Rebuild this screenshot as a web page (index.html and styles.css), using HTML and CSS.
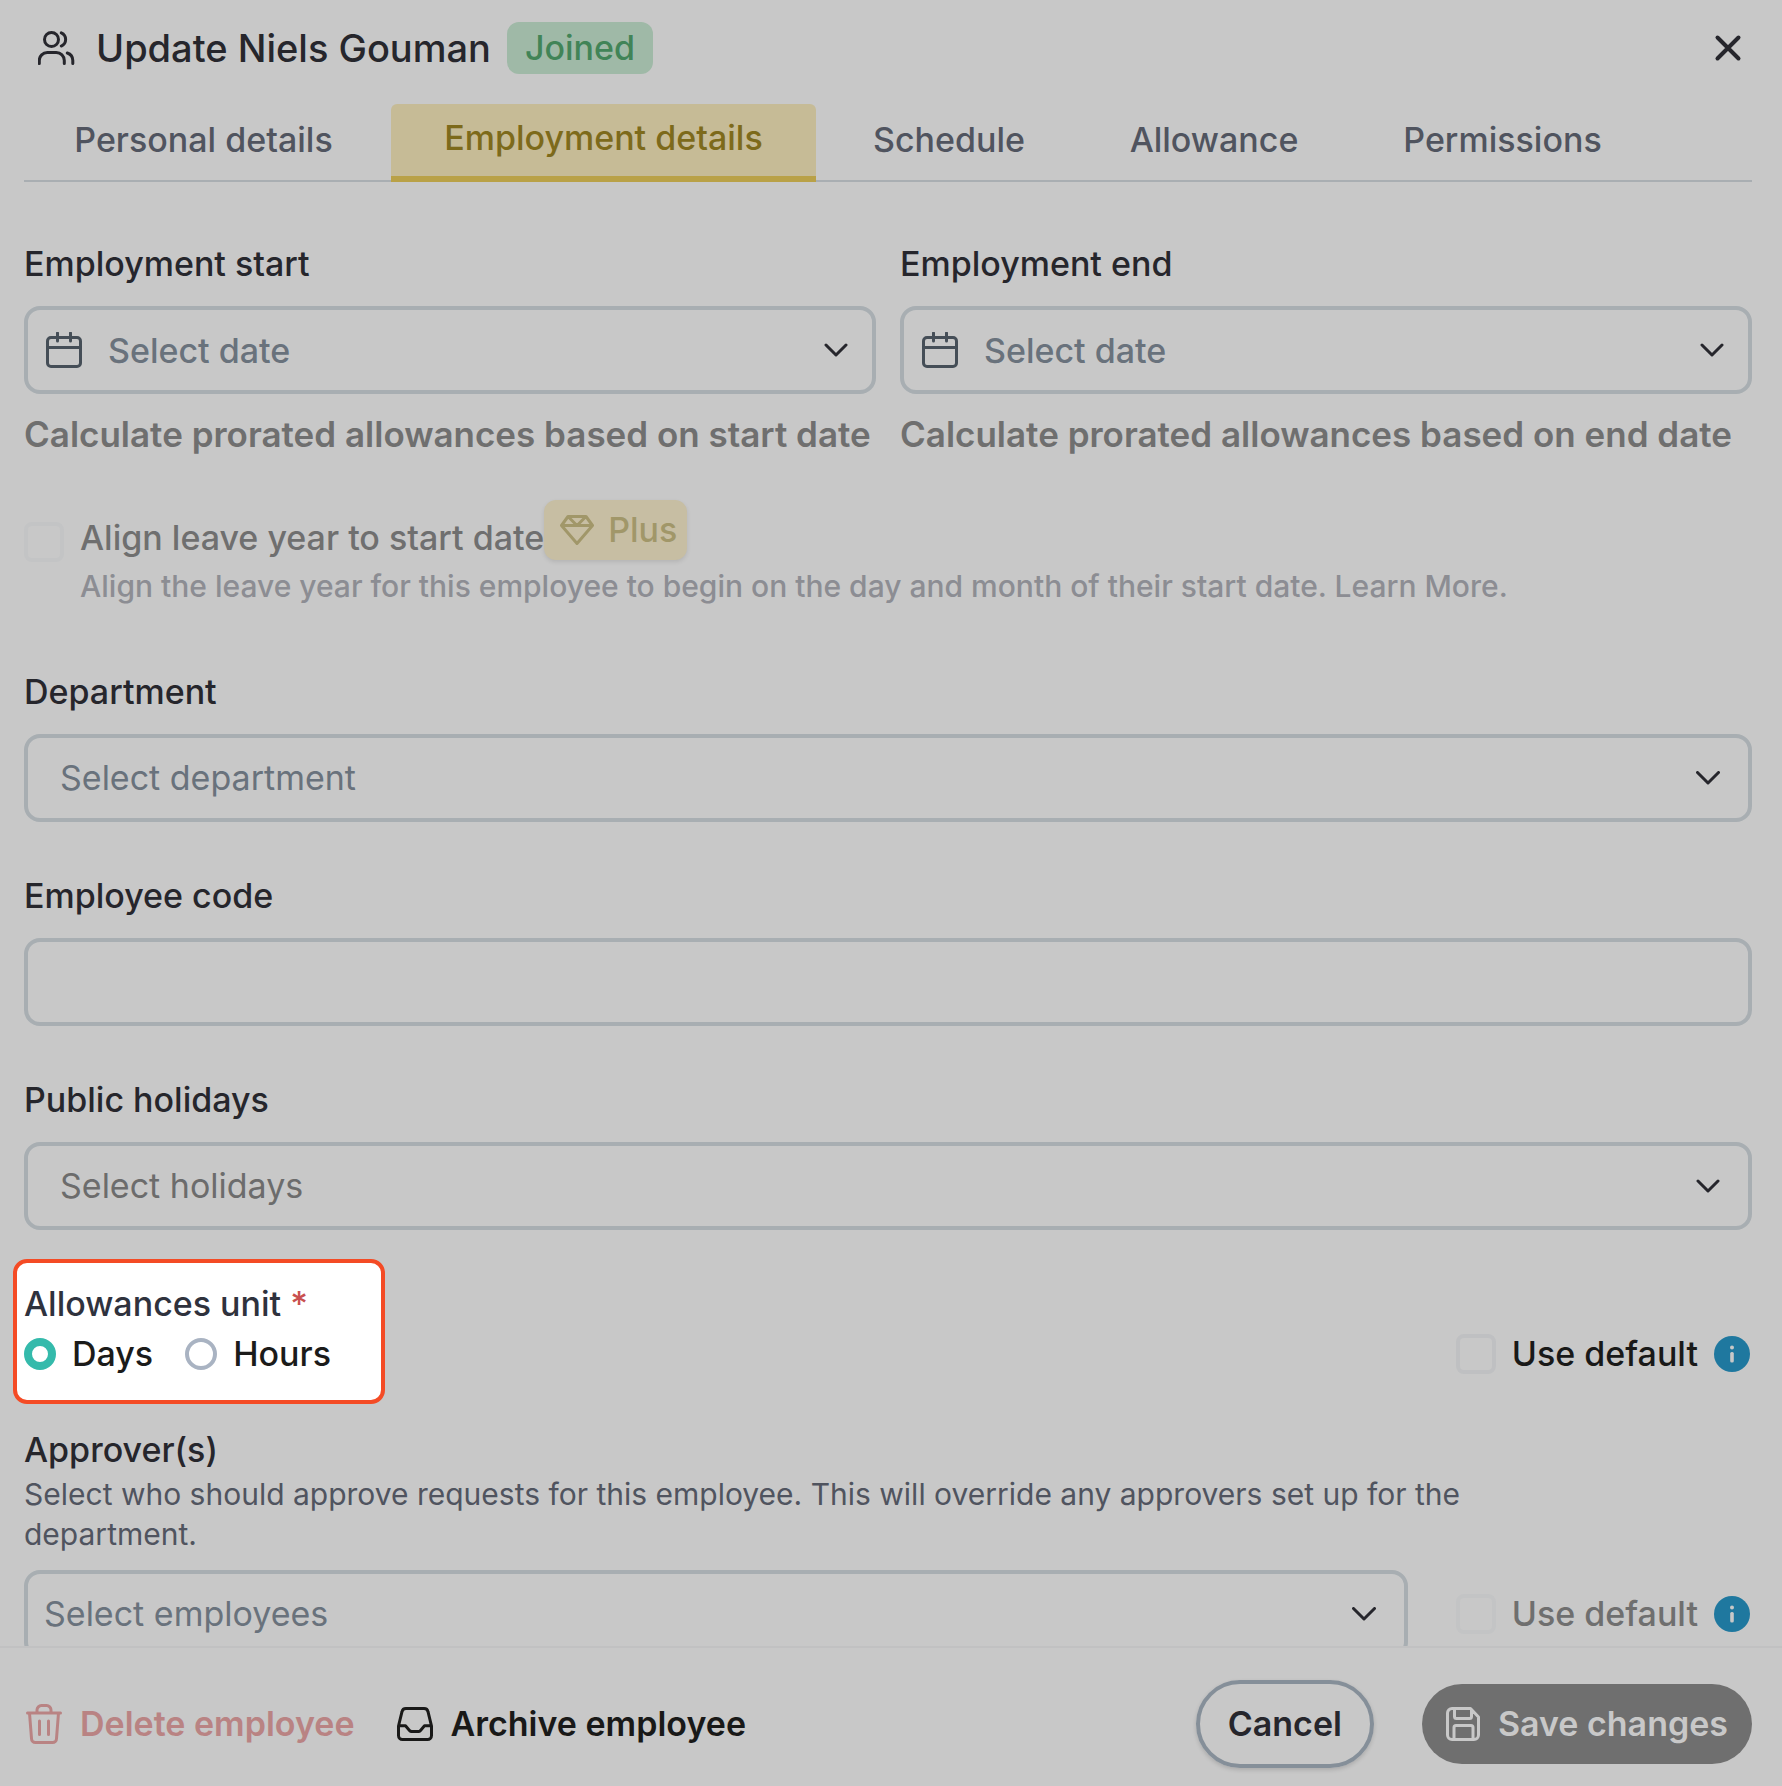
FILE: index.html
```html
<!DOCTYPE html>
<html lang="en">
<head>
<meta charset="utf-8">
<meta name="viewport" content="width=device-width, initial-scale=1">
<title>Update Niels Gouman</title>
<link rel="stylesheet" href="styles.css">
</head>
<body>
<main class="dialog">
  <header class="header">
    <svg class="icon icon-users" viewBox="0 0 38 34" aria-hidden="true"><circle cx="13.500" cy="8.500" r="7"/><path d="M23.300 1.800a7.200 7.200 0 0 1 0 13.200M1.300 32.500v-3a8 8 0 0 1 8-8h9a8 8 0 0 1 8 8v3M29.300 22a8 8 0 0 1 5.500 7.500v3"/></svg>
    <h1 class="title">Update Niels Gouman</h1>
    <span class="status">Joined</span>
    <button class="close" type="button" aria-label="Close"><svg class="icon icon-close" viewBox="0 0 28 28" aria-hidden="true"><path d="M3.500 3.500l21 21M24.500 3.500l-21 21"/></svg></button>
  </header>

  <nav class="tabs" role="tablist">
    <button class="tab" type="button" role="tab">Personal details</button>
    <button class="tab tab-active" type="button" role="tab" aria-selected="true">Employment details</button>
    <button class="tab" type="button" role="tab">Schedule</button>
    <button class="tab" type="button" role="tab">Allowance</button>
    <button class="tab" type="button" role="tab">Permissions</button>
  </nav>

  <form class="content" id="employee-form">
    <div class="dates">
      <div class="field">
        <label class="label" for="start">Employment start</label>
        <div class="control control-date">
          <svg class="icon icon-calendar" viewBox="0 0 36 36" aria-hidden="true"><rect x="1.500" y="5.500" width="33" height="29" rx="3.500"/><path d="M1.500 15.500h33M11.500 1v8M24.500 1v8"/></svg>
          <input class="input" id="start" type="text" placeholder="Select date">
          <svg class="icon icon-chevron" viewBox="0 0 24 14" aria-hidden="true"><path d="M2 2l10 10L22 2"/></svg>
        </div>
        <p class="helper">Calculate prorated allowances based on start date</p>
      </div>
      <div class="field">
        <label class="label" for="end">Employment end</label>
        <div class="control control-date">
          <svg class="icon icon-calendar" viewBox="0 0 36 36" aria-hidden="true"><rect x="1.500" y="5.500" width="33" height="29" rx="3.500"/><path d="M1.500 15.500h33M11.500 1v8M24.500 1v8"/></svg>
          <input class="input" id="end" type="text" placeholder="Select date">
          <svg class="icon icon-chevron" viewBox="0 0 24 14" aria-hidden="true"><path d="M2 2l10 10L22 2"/></svg>
        </div>
        <p class="helper">Calculate prorated allowances based on end date</p>
      </div>
    </div>

    <div class="align">
      <input class="checkbox checkbox-disabled" id="align" type="checkbox" disabled>
      <div class="align-body">
        <div class="align-head">
          <label class="align-label" for="align">Align leave year to start date</label>
          <span class="plus"><svg class="icon icon-gem" viewBox="0 0 34 30" aria-hidden="true"><path d="M8 1.500h18l6.500 9L17 28.500 1.500 10.500zM1.500 10.500h31M8.500 2l8.500 8.500L25.500 2"/></svg>Plus</span>
        </div>
        <p class="align-text">Align the leave year for this employee to begin on the day and month of their start date. <a class="learn" href="#learn">Learn More.</a></p>
      </div>
    </div>

    <div class="stack">
      <div class="field">
        <label class="label" for="department">Department</label>
        <div class="control control-select">
          <select class="input" id="department"><option>Select department</option></select>
          <svg class="icon icon-chevron" viewBox="0 0 24 14" aria-hidden="true"><path d="M1.500 1.500L12 12 22.500 1.500"/></svg>
        </div>
      </div>
      <div class="field">
        <label class="label" for="code">Employee code</label>
        <div class="control control-select"><input class="input" id="code" type="text"></div>
      </div>
      <div class="field">
        <label class="label" for="holidays">Public holidays</label>
        <div class="control control-select">
          <select class="input input-dim" id="holidays"><option>Select holidays</option></select>
          <svg class="icon icon-chevron" viewBox="0 0 24 14" aria-hidden="true"><path d="M2 2l10 10L22 2"/></svg>
        </div>
      </div>
    </div>

    <div class="unit-row">
      <div class="unit" role="radiogroup" aria-labelledby="unit-label">
        <div class="unit-label" id="unit-label">Allowances unit <span class="required">*</span></div>
        <div class="options">
          <label class="option"><input class="radio" type="radio" name="unit" checked>Days</label>
          <label class="option"><input class="radio" type="radio" name="unit">Hours</label>
        </div>
      </div>
      <div class="default default-unit">
        <label class="default-label"><input class="checkbox" type="checkbox">Use default</label>
        <svg class="icon-info" viewBox="0 0 36 36" aria-hidden="true"><circle cx="18" cy="18" r="18" fill="#1f789f"/><circle cx="18" cy="11.500" r="2" fill="#c8c8c8"/><rect x="16.200" y="16" width="3.600" height="10.500" rx="1.500" fill="#c8c8c8"/></svg>
      </div>
    </div>

    <div class="approvers">
      <label class="label-tight" for="approvers">Approver(s)</label>
      <p class="approver-text">Select who should approve requests for this employee. This will override any approvers set up for the department.</p>
      <div class="approver-row">
        <div class="control control-employees">
          <select class="input" id="approvers"><option>Select employees</option></select>
          <svg class="icon icon-chevron" viewBox="0 0 24 14" aria-hidden="true"><path d="M1.500 1.500L12 12 22.500 1.500"/></svg>
        </div>
        <div class="default">
          <label class="default-label default-disabled"><input class="checkbox checkbox-disabled" type="checkbox" disabled>Use default</label>
          <svg class="icon-info" viewBox="0 0 36 36" aria-hidden="true"><circle cx="18" cy="18" r="18" fill="#1f789f"/><circle cx="18" cy="11.500" r="2" fill="#c8c8c8"/><rect x="16.200" y="16" width="3.600" height="10.500" rx="1.500" fill="#c8c8c8"/></svg>
        </div>
      </div>
    </div>
  </form>

  <footer class="footer">
    <button class="action action-delete" type="button"><svg class="icon icon-trash" viewBox="0 0 36 40" aria-hidden="true"><path d="M1.500 9h33M3.500 9l2 25.500a4 4 0 0 0 4 4h17a4 4 0 0 0 4-4l2-25.500M11 8.500V6a4.500 4.500 0 0 1 4.500-4.500h5A4.500 4.500 0 0 1 25 6v2.500M13.500 17v13.500M22.500 17v13.500"/></svg>Delete employee</button>
    <button class="action action-archive" type="button"><svg class="icon icon-archive" viewBox="0 0 36 34" aria-hidden="true"><path d="M1.500 19v9.500a4 4 0 0 0 4 4h25a4 4 0 0 0 4-4V19L31 4.700A4 4 0 0 0 27.100 1.500H8.900A4 4 0 0 0 5 4.700zM1.500 18.800h7l4 4.600a3 3 0 0 0 2.300 1h6.400a3 3 0 0 0 2.300-1l4-4.600h7"/></svg>Archive employee</button>
    <button class="pill cancel" type="button">Cancel</button>
    <button class="pill save" type="submit" form="employee-form"><svg class="icon icon-save" viewBox="0 0 34 34" aria-hidden="true"><path d="M6 1.500h18.500L32.500 10v18a4.500 4.500 0 0 1-4.500 4.500H6A4.500 4.500 0 0 1 1.500 28V6A4.500 4.500 0 0 1 6 1.500zM8 32V20.500a2 2 0 0 1 2-2h15a2 2 0 0 1 2 2V32M8.500 2v7.500a2 2 0 0 0 2 2h13a2 2 0 0 0 2-2V3"/></svg>Save changes</button>
  </footer>
</main>
</body>
</html>
```
FILE: styles.css
```css
* { box-sizing: border-box; }

body {
  margin: 0;
  background: #c8c8c8;
  color: #26262c;
  font: 500 34px/48px Inter, "Liberation Sans", sans-serif;
}

h1, p { margin: 0; }
button, input, select { font: inherit; color: inherit; }
button { padding: 0; border: 0; background: none; }

.dialog {
  display: flex;
  flex-direction: column;
  height: 100vh;
}

.icon {
  flex: none;
  fill: none;
  stroke: currentColor;
  stroke-width: 3;
  stroke-linecap: round;
  stroke-linejoin: round;
}
.icon-users { width: 38px; height: 34px; margin-right: 20px; }
.icon-close { width: 28px; height: 28px; stroke-width: 4; }
.icon-calendar { width: 36px; height: 36px; color: #454e57; }
.icon-chevron { width: 24px; height: 14px; }
.icon-gem { width: 34px; height: 30px; }
.icon-trash { width: 36px; height: 40px; }
.icon-archive { width: 36px; height: 34px; }
.icon-save { width: 34px; height: 34px; }
.icon-info { flex: none; width: 36px; height: 36px; }

.header {
  display: flex;
  align-items: center;
  padding: 22px 40px 30px 38px;
}
.title { font-size: 38px; font-weight: 500; }
.status {
  margin-left: 16px;
  padding: 2px 18px;
  border-radius: 12px;
  background: #9fb9a7;
  color: #418457;
}
.close { display: flex; margin-left: auto; }

.tabs {
  display: grid;
  grid-template-columns: 359px 425px 250px 264px 297px;
  gap: 8px;
  height: 78px;
  margin: 0 30px 0 24px;
  border-bottom: 2px solid #a9aeb2;
}
.tab {
  height: 76px;
  padding-bottom: 4px;
  color: #50545f;
}
.tab-active {
  height: 78px;
  border-bottom: 6px solid #b9a147;
  border-radius: 6px 6px 0 0;
  background: #c6bb96;
  color: #7d6a1b;
}

.content {
  flex: 1;
  min-height: 0;
  overflow: hidden;
  padding: 58px 30px 0 24px;
}
.dates {
  display: grid;
  grid-template-columns: 1fr 1fr;
  gap: 24px;
}
.field { display: flex; flex-direction: column; gap: 18px; }
.control {
  display: flex;
  align-items: center;
  height: 88px;
  border: 4px solid #a8aeb2;
  border-radius: 16px;
}
.control-date { padding: 0 24px 0 18px; }
.control-select { padding: 0 28px 0 32px; }
.control-employees { flex: 1; padding: 0 28px 0 16px; }
.input {
  flex: 1;
  min-width: 0;
  height: 100%;
  padding: 0;
  border: 0;
  outline: 0;
  background: none;
  appearance: none;
  color: #69727c;
  font-weight: 400;
}
.input::placeholder { color: #69727c; opacity: 1; }
.control-date .input { margin-left: 26px; font-weight: 500; }
.input-dim { color: #6c6c6c; }
.helper {
  margin-top: -2px;
  color: #6f6f6f;
  font-size: 35px;
  font-weight: 600;
  white-space: nowrap;
}

.checkbox {
  flex: none;
  width: 40px;
  height: 40px;
  margin: 0;
  border: 4px solid #bfc0c2;
  border-radius: 8px;
  appearance: none;
}
.checkbox-disabled { border-color: #c3c4c5; }

.align { display: flex; gap: 16px; margin-top: 42px; }
.align .checkbox { margin-top: 22px; }
.align-head { display: flex; height: 62px; }
.align-label { margin-top: 14px; color: #6f6f6f; }
.plus {
  display: flex;
  align-items: center;
  gap: 14px;
  height: 60px;
  padding: 0 10px 0 16px;
  border-radius: 12px;
  background: #c7bea3;
  box-shadow: 0 2px 4px rgba(0, 0, 0, 0.1);
  color: #a19769;
}
.align-text {
  margin-top: 4px;
  color: #8c8d93;
  font-size: 30px;
  line-height: 40px;
}
.learn { color: inherit; text-decoration: none; }

.stack { display: grid; gap: 50px; margin-top: 62px; }

.unit-row {
  display: flex;
  align-items: flex-end;
  justify-content: space-between;
  margin-top: 29px;
}
.unit {
  width: 372px;
  margin-left: -11px;
  padding: 17px 8px 22px 7px;
  border: 4px solid #f44b25;
  border-radius: 14px;
  background: #fff;
  color: #2f323d;
}
.required { color: #c9504f; }
.options { display: flex; gap: 32px; margin-top: 2px; color: #1b1b1a; }
.option { display: flex; align-items: center; gap: 16px; }
.radio {
  width: 32px;
  height: 32px;
  margin: 0;
  border: 4px solid #a9b3c2;
  border-radius: 50%;
  appearance: none;
}
.radio:checked { border: 8px solid #34baab; }

.default { display: flex; flex: none; align-items: center; gap: 16px; padding-right: 2px; }
.default-unit { padding-bottom: 26px; }
.default-label { display: flex; align-items: center; gap: 16px; color: #191918; }
.default-disabled { color: #6f6f6f; }

.approvers { margin-top: 22px; }
.label-tight { display: block; }
.approver-text {
  max-width: 84%;
  color: #50545f;
  font-size: 30px;
  font-weight: 400;
  line-height: 40px;
}
.approver-row { display: flex; align-items: center; gap: 48px; margin-top: 16px; }

.footer {
  display: flex;
  flex: none;
  align-items: center;
  padding: 32px 30px 18px 26px;
  border-top: 2px solid #c1c1c2;
  font-weight: 600;
}
.action { display: flex; align-items: center; gap: 18px; }
.action-delete { color: #b98383; }
.action-archive { margin-left: 42px; color: #191918; }
.pill {
  display: flex;
  align-items: center;
  justify-content: center;
  border-radius: 44px;
}
.cancel {
  height: 88px;
  margin-left: auto;
  padding: 0 28px;
  border: 4px solid #858f99;
  box-shadow: 0 2px 4px rgba(0, 0, 0, 0.15);
}
.save {
  gap: 18px;
  height: 80px;
  margin-left: 48px;
  padding: 0 24px;
  background: #6f6f6f;
  color: #c8c8c8;
}
```
